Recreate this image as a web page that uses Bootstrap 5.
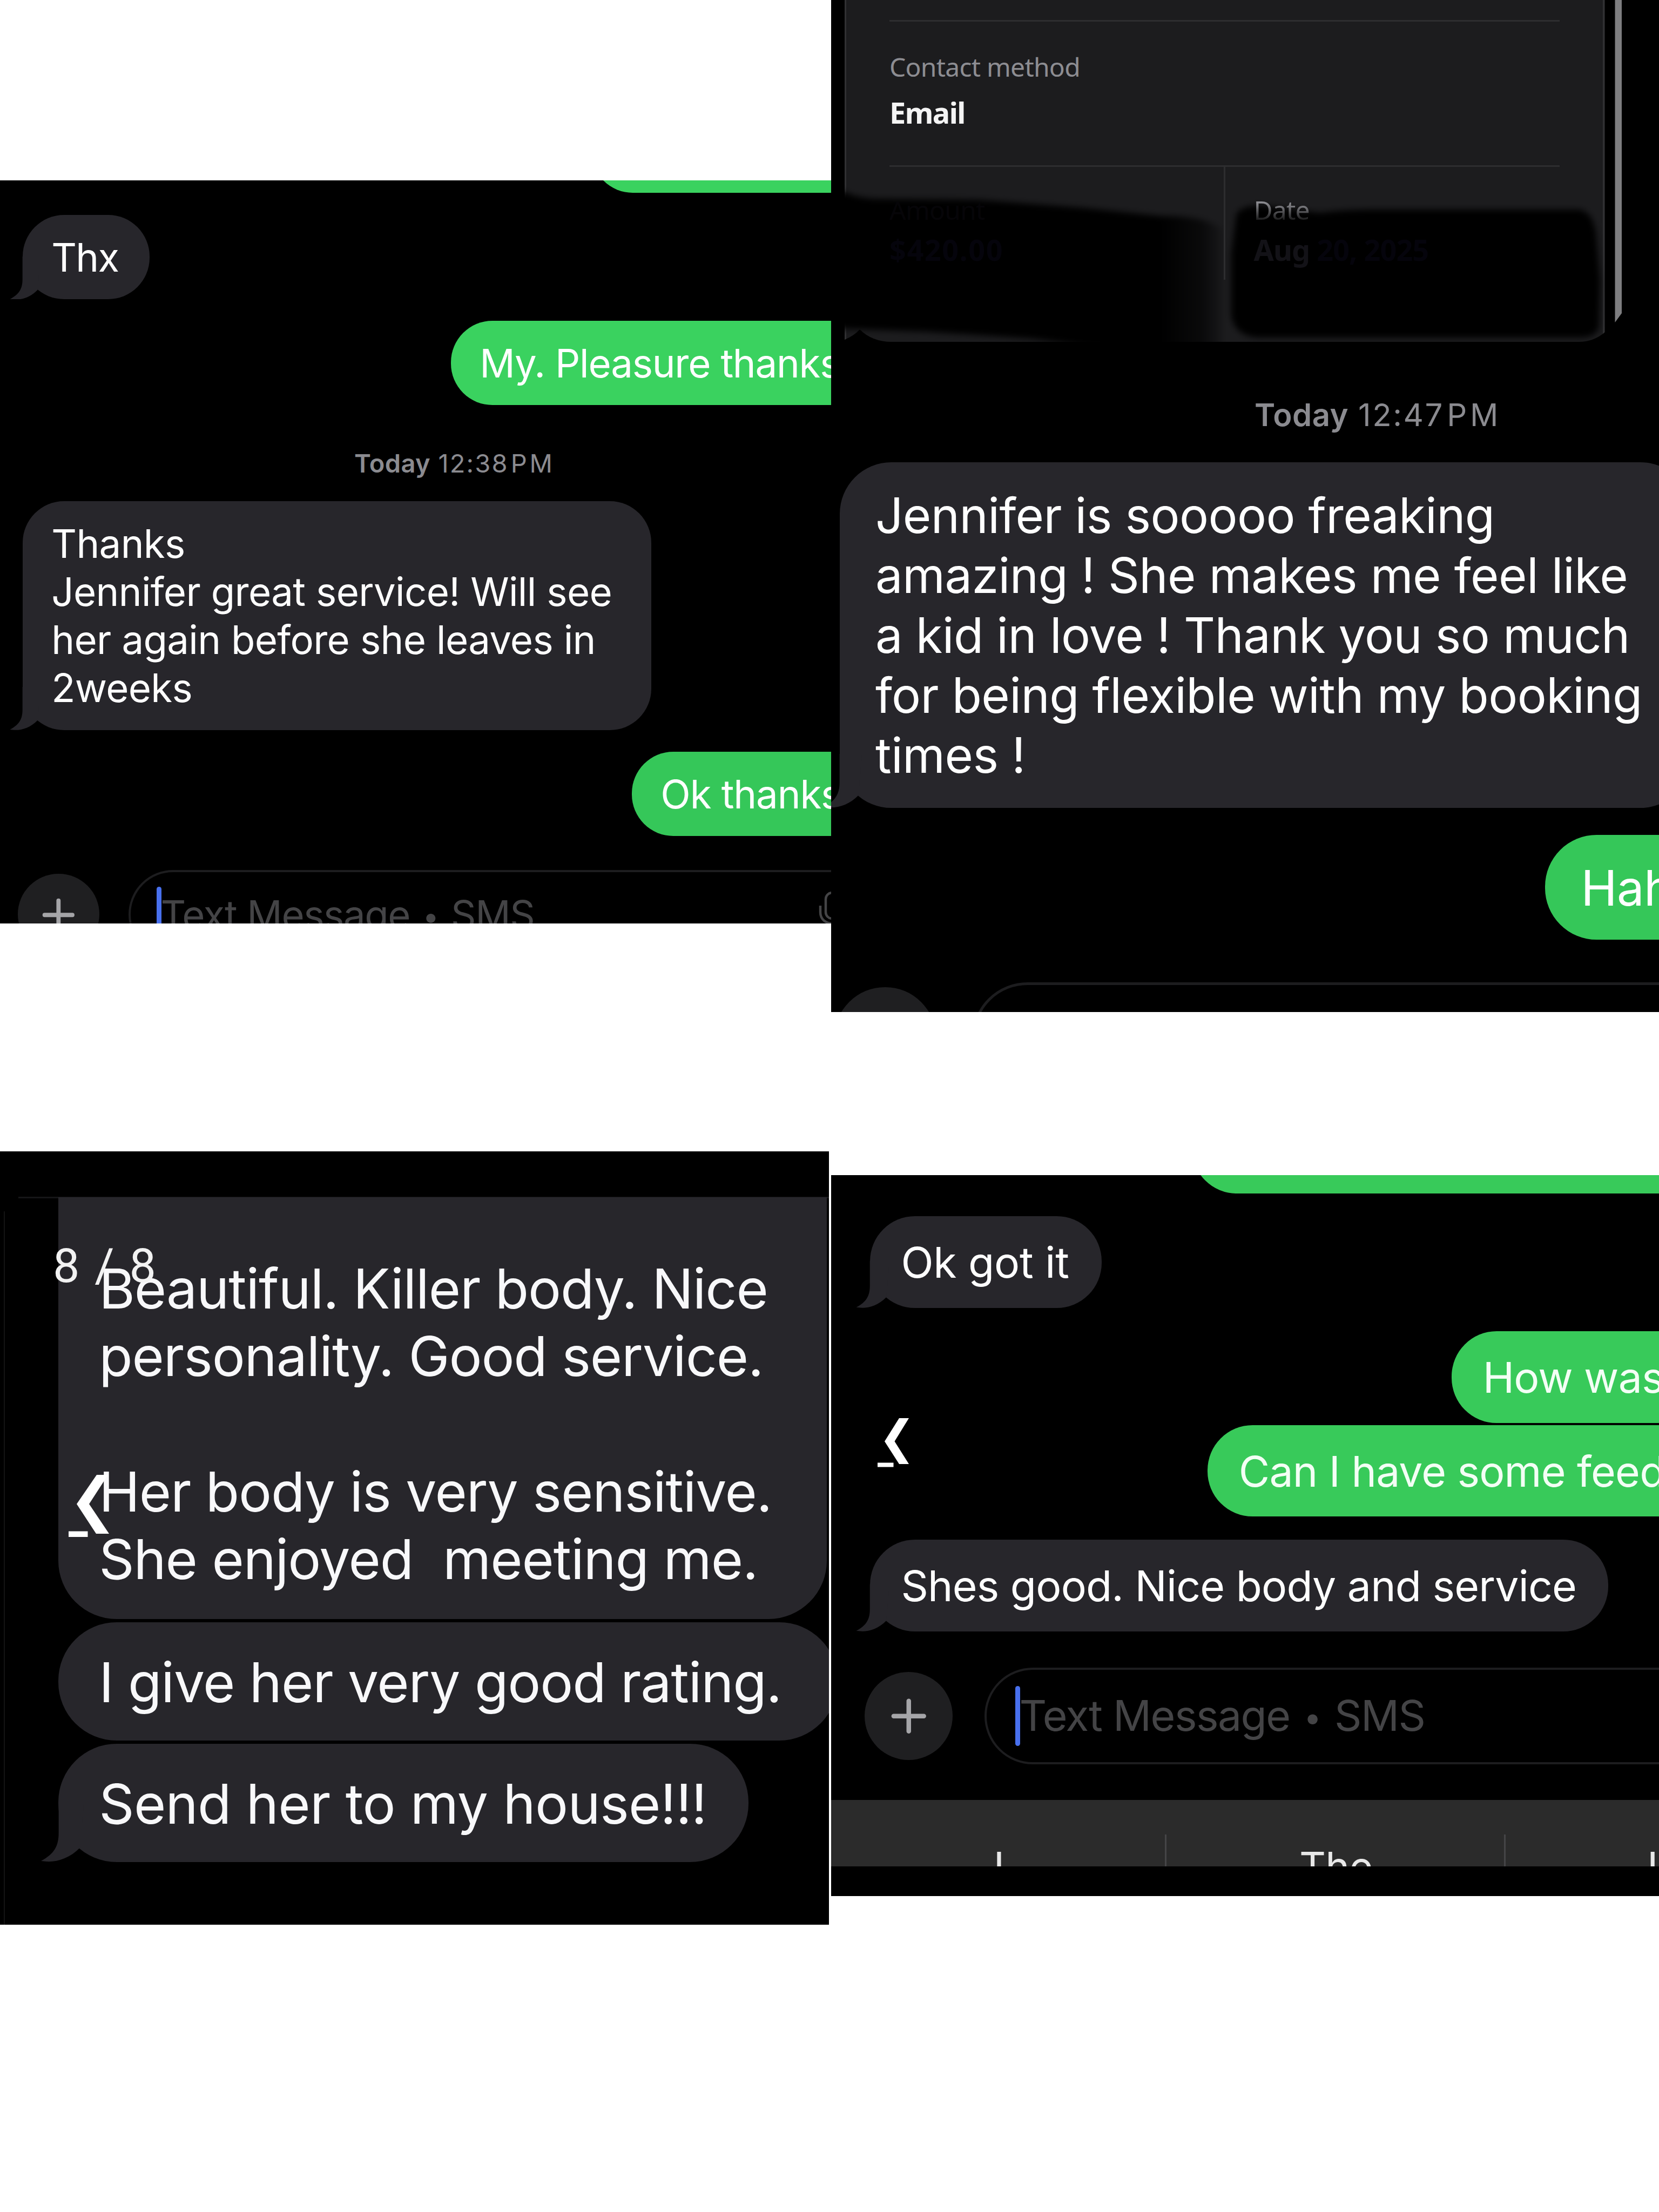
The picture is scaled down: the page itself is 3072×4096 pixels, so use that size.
<!DOCTYPE html>
<html lang="en">
<head>
<meta charset="utf-8">
<title>Message gallery</title>
<link rel="stylesheet" href="https://cdn.jsdelivr.net/npm/bootstrap@5.3.0/dist/css/bootstrap.min.css">
<style>
body{background:#fff;font-family:Inter,"Liberation Sans",sans-serif;color:#fff;height:4096px;overflow:hidden}
.gallery{width:3072px;height:4096px}
.col-left{width:1539px}
.col-right{width:1533px}
.shot{background:#000;line-height:1.23}
.shot-a{margin-top:334px;height:1376px;width:1539px;font-size:72.5px;letter-spacing:-.0093em}
.shot-b{height:1874px;font-size:90.2px;letter-spacing:-.0068em}
.shot-c{margin-top:422px;height:1432px;width:1535px;font-size:101.9px;letter-spacing:-.011em;color:#f8f8fa}
.shot-d{margin-top:302px;height:1335px;font-size:78.7px;letter-spacing:-.0105em}
.bubble{background:#27262b;border-radius:1.06em;padding:.48em 0 0 .735em;height:2.154em;position:relative;white-space:pre;flex:none}
.bubble.sent{background:#35c759;margin-right:-600px}
.shot-a .bubble{padding-top:.465em}
.shot-b .bubble{padding-top:.493em}
.tail{position:absolute;left:-.34em;bottom:0;width:.8em;height:1.1em;fill:#27262b}
.stamp{color:#8b8b90;font-size:47px;line-height:1;white-space:pre}
.stamp b{font-weight:600;letter-spacing:.008em}
.stamp .clock{letter-spacing:.045em;margin-left:.31em}
.stamp .half{letter-spacing:.1em;margin-left:.09em}
.composer{gap:.745em}
.plus{border-radius:50%;background:#1f1f21;width:2.078em;height:2.078em;flex:none}
.plus svg{width:100%;height:100%;stroke:#a5a5a8}
.field{border:.062em solid #1d1d1f;border-radius:1.14em;height:2.275em;width:1500px;padding-left:.67em;color:#444446;white-space:pre;letter-spacing:-.0194em;flex:none}
.dot{font-size:.75em;margin:0 .08em;vertical-align:.07em;line-height:1}
.caret{background:#4870ee;border-radius:.06em;width:.12em;height:1.42em;margin-right:-.02em;flex:none}
.mic{width:50px;height:120px;margin:35px 168px 0 auto}

.a0{margin:-133px 0 0 1095px}
.shot-a .a0,.shot-a .a2{background:#3ad25f}
.a1{margin:41px 0 0 42px;width:234.5px;letter-spacing:-.024em}
.a2{margin:40px 0 0 835px;letter-spacing:-.017em}
.a3{margin:84px 0 0 656px}
.a4{margin:46.5px 0 0 42px;width:1164px;height:424px}
.a5{margin:40px 0 0 1170px;letter-spacing:-.015em}
.a6{margin:62.5px 0 0 33px}

.receipt{width:1533px;height:633px;font-family:"Noto Sans",sans-serif;letter-spacing:0;line-height:1;padding-left:108px;flex:none}
.receipt svg{left:0;top:0}
.receipt .rule{border-bottom:3.5px solid #2d2d2f;width:1241px}
.r1{height:39.5px}
.r2{height:269.5px;padding-top:60px}
.key{font-size:48px;color:#8d8d92;letter-spacing:-.016em}
.val{font-size:54px;font-weight:700;color:#f4f4f4;letter-spacing:-.028em}
.r2 .val{margin-top:33px}
.cell-l{width:618.5px;padding-top:56px}
.cell-r{border-left:3px solid #2d2d2f;height:209px;padding:56px 0 0 53px}
.cell-l .val,.cell-r .val{margin-top:22px;color:#05040c;letter-spacing:-.018em;white-space:pre}
.cell-l .key{color:#060508}
.cell-l .val{letter-spacing:.028em}
.cell-r .key{-webkit-mask-image:linear-gradient(#000 20%,transparent 105%);mask-image:linear-gradient(#000 20%,transparent 105%)}
.cell-r .val span{color:#131217}
.b1{margin:106px 0 0 784px;font-size:58px}
.b2{margin:58.5px 0 0 15.7px;width:1578px;height:640px}
.b3{margin:50px 0 0 1322.3px}
.b4{margin:79px 0 0 6.3px}

.shot-c::before{content:"";position:absolute;left:34px;right:0;top:84px;height:3px;background:#151517}
.shot-c::after{content:"";position:absolute;left:7px;top:111px;bottom:0;width:2px;background:#131313}
.shot-c .bubble{height:218.5px}
.shot-c .c1{margin:85px 0 0 108.3px;width:1423px;height:781px;padding-top:107px;border-top-left-radius:0;border-top-right-radius:0}
.c2{margin:6px 0 0 108.3px;width:1443px}
.c3{margin:6.5px 0 0 108.3px;width:1278px;letter-spacing:-.0067em}
.counter{left:98px;top:168px;font:400 88px/1 Roboto,sans-serif;letter-spacing:.034em;color:#f2f2f2;white-space:pre}
.prev-c{left:127px;top:599px;width:76px;height:116px}
.prev-d{left:86px;top:450px;width:58px;height:91px}

.d0{margin:-135.4px 0 0 668px}
.d1{margin:42px 0 0 71.6px;width:429.3px;letter-spacing:-.0034em}
.d2{margin:43.7px 0 0 1148.8px}
.d3{margin:4px 0 0 697px}
.d4{margin:43px 0 0 71.6px;width:1367.3px}
.d5{margin:67px 0 0 61.8px}
.shot-d .sent{background:#38ca5a;color:#f3fff5}
.suggest{margin-top:66.5px;height:122.5px;background:#2b2b2b;color:#e8e8e8;font-size:76px;line-height:1;flex:none}
.suggest div{width:628px;padding-top:84.5px;flex:none}
.suggest div:first-child{width:621px}
.suggest div:last-child{padding-left:262px}
.suggest i{width:3px;margin:64px 0 0 -3px;background:#454547;flex:none}
</style>
</head>
<body>
<div class="gallery d-flex">
  <div class="col-left">
    <section class="shot shot-a overflow-hidden d-flex flex-column">
      <div class="bubble sent a0"></div>
      <div class="bubble a1">Thx<svg class="tail" viewBox="-34 -110 80 110"><path d="M0-110V-52C0-28-8-14-32-1L-22 0C-2 1 20-6 38.7-25L46-110Z"/></svg></div>
      <div class="bubble sent a2">My. Pleasure thanks</div>
      <div class="stamp a3 d-flex"><b>Today</b><span class="clock">12:38</span><span class="half">PM</span></div>
      <div class="bubble a4">Thanks
Jennifer great service! Will see
her again before she leaves in
2weeks<svg class="tail" viewBox="-34 -110 80 110"><path d="M0-110V-52C0-28-8-14-32-1L-22 0C-2 1 20-6 38.7-25L46-110Z"/></svg></div>
      <div class="bubble sent a5">Ok thanks</div>
      <div class="composer d-flex align-items-center a6">
        <div class="plus"><svg viewBox="0 0 164 164"><path d="M54 83H110M82 54V112" stroke-width="8.5" stroke-linecap="round"/></svg></div>
        <div class="field d-flex align-items-center"><div class="caret"></div><div>Text Message <span class="dot">•</span> SMS</div>
          <svg class="mic" viewBox="0 0 50 120" fill="none" stroke="#444446" stroke-width="4.5"><rect x="13" y="2" width="24" height="48" rx="12"/><path d="M3 26V38C3 66 47 66 47 38V26M25 60V74"/></svg></div>
      </div>
    </section>
    <section class="shot shot-c overflow-hidden d-flex flex-column position-relative">
      <div class="bubble c1">Beautiful. Killer body. Nice
personality. Good service.

Her body is very sensitive.
She enjoyed  meeting me.</div>
      <div class="bubble c2">I give her very good rating.</div>
      <div class="bubble c3">Send her to my house!!!<svg class="tail" viewBox="-34 -110 80 110"><path d="M0-110V-52C0-28-8-14-32-1L-22 0C-2 1 20-6 38.7-25L46-110Z"/></svg></div>
      <div class="counter position-absolute">8 / 8</div>
      <svg class="prev-c position-absolute" viewBox="0 0 76 116" fill="#fff"><path d="M52 0H73L38 54L75 109H51L15 54ZM0 104.5H35.5V115H0Z"/></svg>
    </section>
  </div>
  <div class="col-right">
    <section class="shot shot-b overflow-hidden d-flex flex-column">
      <div class="receipt position-relative">
        <svg class="position-absolute" width="1533" height="633" viewBox="0 0 1533 633">
          <defs>
            <clipPath id="card"><path d="M25-2H1433V615Q1412 633 1384 633H112Q76 633 53 610Q42 622 25 629Z"/></clipPath>
            <linearGradient id="fade" x1="610" x2="728" y1="0" y2="0" gradientUnits="userSpaceOnUse"><stop offset="0"/><stop offset=".65" stop-opacity=".65"/><stop offset="1" stop-opacity=".1"/></linearGradient>
            <filter id="soft" x="-10%" y="-10%" width="120%" height="120%"><feGaussianBlur stdDeviation="6"/></filter>
          </defs>
          <path d="M1451.5 0H1464V580L1451.5 597Z" fill="#7e7e80"/>
          <g clip-path="url(#card)">
            <path d="M0 0H1500V640H0Z" fill="#1c1c1e"/>
            <path d="M26.5 0V640M1430.5 0V640" stroke="#303032" stroke-width="3"/>
            <path d="M0 348C30 355 40 366 80 368L272 370L468 385L610 400C660 400 700 405 725 425V660H620L370 627L174 614L0 608Z" fill="url(#fade)" filter="url(#soft)"/>
            <path d="M750 400Q752 384 790 380L905 394Q950 388 1000 388L1385 388Q1410 392 1416 430L1424 520L1422 605Q1417 624 1390 625H790Q748 622 741 585V470Z" fill="#020203" filter="url(#soft)"/>
          </g>
        </svg>
        <div class="position-relative">
          <div class="rule r1"></div>
          <div class="rule r2"><div class="key">Contact method</div><div class="val">Email</div></div>
          <div class="d-flex">
            <div class="cell-l"><div class="key">Amount</div><div class="val">$420.00</div></div>
            <div class="cell-r"><div class="key">Date</div><div class="val"><span>Aug</span> 20, 2025</div></div>
          </div>
        </div>
      </div>
      <div class="stamp b1 d-flex"><b>Today</b><span class="clock">12:47</span><span class="half">PM</span></div>
      <div class="bubble b2">Jennifer is sooooo freaking
amazing ! She makes me feel like
a kid in love ! Thank you so much
for being flexible with my booking
times !<svg class="tail" viewBox="-34 -110 80 110"><path d="M0-110V-52C0-28-8-14-32-1L-22 0C-2 1 20-6 38.7-25L46-110Z"/></svg></div>
      <div class="bubble sent b3">Haha</div>
      <div class="composer d-flex align-items-center b4">
        <div class="plus"></div>
        <div class="field"></div>
      </div>
    </section>
    <section class="shot shot-d overflow-hidden d-flex flex-column position-relative">
      <div class="bubble sent d0"></div>
      <div class="bubble d1">Ok got it<svg class="tail" viewBox="-34 -110 80 110"><path d="M0-110V-52C0-28-8-14-32-1L-22 0C-2 1 20-6 38.7-25L46-110Z"/></svg></div>
      <div class="bubble sent d2">How was</div>
      <div class="bubble sent d3">Can I have some feed</div>
      <div class="bubble d4">Shes good. Nice body and service<svg class="tail" viewBox="-34 -110 80 110"><path d="M0-110V-52C0-28-8-14-32-1L-22 0C-2 1 20-6 38.7-25L46-110Z"/></svg></div>
      <div class="composer d-flex align-items-center d5">
        <div class="plus"><svg viewBox="0 0 164 164"><path d="M54 82H110M82 54V110" stroke-width="8.5" stroke-linecap="round"/></svg></div>
        <div class="field d-flex align-items-center"><div class="caret"></div><div>Text Message <span class="dot">•</span> SMS</div></div>
      </div>
      <div class="suggest d-flex overflow-hidden"><div class="text-center">I</div><i></i><div class="text-center">The</div><i></i><div>I</div></div>
      <svg class="prev-d position-absolute" viewBox="0 0 58 91" fill="#fff"><path d="M40 0H58L31.500 43L58 85H40L13 43ZM0 82.500H29.500V90.500H0Z"/></svg>
    </section>
  </div>
</div>
<script src="https://cdn.jsdelivr.net/npm/bootstrap@5.3.0/dist/js/bootstrap.bundle.min.js"></script>
</body>
</html>
